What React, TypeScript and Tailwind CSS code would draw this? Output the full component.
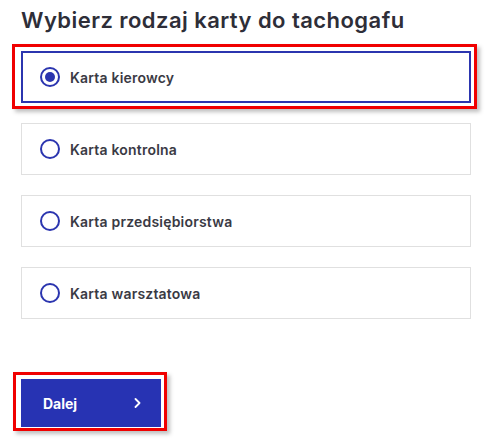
import { useState } from "react";

const cards = [
  "Karta kierowcy",
  "Karta kontrolna",
  "Karta przedsiębiorstwa",
  "Karta warsztatowa",
];

function Radio({ checked }: { checked: boolean }) {
  return (
    <span className="flex h-5 w-5 shrink-0 items-center justify-center rounded-full border-2 border-[#2b35af]">
      {checked && <span className="h-[10px] w-[10px] rounded-full bg-[#2b35af]"></span>}
    </span>
  );
}

export default function App() {
  const [selected, setSelected] = useState(0);

  return (
    <div
      className="min-h-screen bg-white pl-[21px] pt-[7px] text-[#2e2e38]"
      style={{ fontFamily: "Inter, 'Noto Sans', sans-serif" }}
    >
      <h1 className="text-[22px] leading-[26px] font-semibold tracking-[0.45px]">
        Wybierz rodzaj karty do tachogafu
      </h1>

      {/* Card options */}
      <div className="mt-[18px] flex w-[450px] flex-col gap-5">
        {cards.map((name, i) => (
          <div key={name} className="relative">
            <button
              onClick={() => setSelected(i)}
              className={
                i === selected
                  ? "flex h-[52px] w-full items-center gap-[10px] border-2 border-[#2b35af] bg-white pl-[17px] text-left"
                  : "flex h-[52px] w-full items-center gap-[10px] border border-[#e0e0e0] bg-white pl-[18px] text-left"
              }
            >
              <Radio checked={i === selected} />
              <span className="text-[14px] font-semibold tracking-[0.2px] text-[#3a3a44]">{name}</span>
            </button>
            {i === 0 && (
              <div className="pointer-events-none absolute -top-[7px] -left-[9px] -right-[6px] -bottom-[6px] border-[3px] border-[#f00000] shadow-[3px_3px_4px_rgba(0,0,0,0.25)]"></div>
            )}
          </div>
        ))}
      </div>

      {/* Next button */}
      <div className="relative mt-[60px] w-[140px]">
        <button className="flex h-[48px] w-full items-center justify-between bg-[#2733b3] pl-[22px] pr-[19px] text-[14px] font-bold text-white">
          Dalej
          <svg width="8" height="10" viewBox="0 0 8 10" fill="none">
            <path d="M1.5 1 L5.5 5 L1.5 9" stroke="white" strokeWidth="1.8" strokeLinecap="round" strokeLinejoin="round" />
          </svg>
        </button>
        <div className="pointer-events-none absolute -top-[7px] -left-[8px] -right-[6px] -bottom-[4px] border-[3px] border-[#f00000] shadow-[3px_3px_4px_rgba(0,0,0,0.25)]"></div>
      </div>
    </div>
  );
}
